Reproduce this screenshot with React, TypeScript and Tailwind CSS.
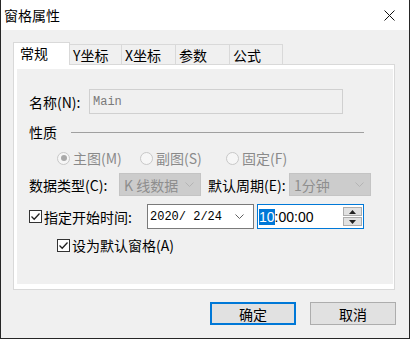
import React from 'react'

const CJK = "font-['Noto_Sans_CJK_SC',sans-serif]"

function Check() {
  return (
    <span className="w-[13px] h-[13px] border border-[#333333] bg-white flex items-center justify-center shrink-0">
      <svg width="11" height="11" viewBox="0 0 11 11">
        <path d="M1.5 5.5 L4.2 8.2 L9.5 2.5" fill="none" stroke="#222" strokeWidth="1.3" />
      </svg>
    </span>
  )
}

function Radio({ checked, label, w }: { checked?: boolean; label: string; w: string }) {
  return (
    <div className={`flex items-center ${w}`}>
      <span className="w-[13px] h-[13px] rounded-full border border-[#c8c8c8] bg-[#f6f6f6] flex items-center justify-center">
        {checked && <span className="w-[6px] h-[6px] rounded-full bg-[#a9a9a9]" />}
      </span>
      <span className="ml-[3px] text-[#8a8a8a]">{label}</span>
    </div>
  )
}

function Chevron({ color }: { color: string }) {
  return (
    <svg width="9" height="6" viewBox="0 0 9 6">
      <path d="M0.5 0.5 L4.5 4.5 L8.5 0.5" fill="none" stroke={color} strokeWidth="1" />
    </svg>
  )
}

function Combo({ text }: { text: string }) {
  return (
    <div className="w-[82px] h-[23px] border border-[#c4c4c4] bg-[#cccccc] flex items-center pl-[4px] pr-[6px]">
      <span className="flex-1 text-[#8e8e8e]">{text}</span>
      <Chevron color="#b4b4b4" />
    </div>
  )
}

const tabs = [
  { label: 'Y坐标', w: 'w-[52px]' },
  { label: 'X坐标', w: 'w-[54px]' },
  { label: '参数', w: 'w-[54px]' },
  { label: '公式', w: 'w-[53px]' },
]

export default function App() {
  return (
    <div className={`w-[410px] h-[339px] bg-[#f0f0f0] border-l border-r border-b border-[#262626] flex flex-col text-[14px] leading-[18px] text-black ${CJK}`}>
      <div className="h-[30px] bg-white flex items-center pl-[3px] pr-[14px] shrink-0">
        <span className="flex-1">窗格属性</span>
        <svg width="11" height="11" viewBox="0 0 11 11">
          <path d="M0.5 0.5 L10.5 10.5 M10.5 0.5 L0.5 10.5" stroke="#111" strokeWidth="1" />
        </svg>
      </div>

      <div className="pl-[12px] pr-[14px] pt-[12px]">
        <div className="flex items-end h-[22px]">
          <div className="w-[57px] h-[23px] -mb-px relative z-10 bg-white border-l border-t border-r border-[#d9d9d9] pl-[6px] pt-[1px]">常规</div>
          {tabs.map((t) => (
            <div key={t.label} className={`${t.w} h-[20px] border-t border-r border-[#d9d9d9] bg-[#f0f0f0] pl-[3px] pt-[1px]`}>
              {t.label}
            </div>
          ))}
        </div>

        <div className="h-[226px] border border-[#d9d9d9] bg-white pt-[4px] pl-[3px] pr-[1px] pb-[5px]">
          <div className="h-full bg-[#f0f0f0] pl-[12px] flex flex-col">
            <div className="flex items-center h-[25px] mt-[20px]">
              <span className="w-[60px]">名称(N):</span>
              <div className="w-[254px] h-[25px] border border-[#d0d0d0] bg-[#f0f0f0] flex items-center pl-[3px] font-['Liberation_Mono',monospace] text-[12px] text-[#7a7a7a]">
                Main
              </div>
            </div>

            <div className="flex items-center h-[20px] mt-[8px]">
              <span>性质</span>
              <span className="ml-[14px] w-[293px] h-px bg-[#a0a0a0]" />
            </div>

            <div className="flex items-center h-[20px] mt-[6px] pl-[28px]">
              <Radio checked label="主图(M)" w="w-[83px]" />
              <Radio label="副图(S)" w="w-[86px]" />
              <Radio label="固定(F)" w="w-[80px]" />
            </div>

            <div className="flex items-center h-[23px] mt-[5px]">
              <span className="w-[90px]">数据类型(C):</span>
              <Combo text="K 线数据" />
              <span className="w-[88px] pl-[7px]">默认周期(E):</span>
              <Combo text="1分钟" />
            </div>

            <div className="flex items-center h-[25px] mt-[8px]">
              <Check />
              <span className="ml-[2px] w-[103px]">指定开始时间:</span>
              <div className="w-[107px] h-[25px] border border-[#7a7a7a] bg-white flex items-center pl-[2px] pr-[9px]">
                <span className="flex-1 font-['Liberation_Mono',monospace] text-[12px]">2020/ 2/24</span>
                <Chevron color="#606060" />
              </div>
              <div className="ml-[3px] w-[107px] h-[25px] border border-[#0078d7] bg-white flex items-center pl-[1px] pr-[1px]">
                <span className="flex-1 font-['Liberation_Sans',sans-serif] text-[14px]">
                  <span className="bg-[#0078d7] text-white">10</span>:00:00
                </span>
                <div className="w-[19px] h-[19px] flex flex-col gap-px">
                  <div className="flex-1 border border-[#adadad] bg-[#e1e1e1] flex items-center justify-center">
                    <svg width="7" height="4" viewBox="0 0 7 4"><path d="M0 4 L3.5 0 L7 4 Z" fill="#222" /></svg>
                  </div>
                  <div className="flex-1 border border-[#adadad] bg-[#e1e1e1] flex items-center justify-center">
                    <svg width="7" height="4" viewBox="0 0 7 4"><path d="M0 0 L3.5 4 L7 0 Z" fill="#222" /></svg>
                  </div>
                </div>
              </div>
            </div>

            <div className="flex items-center h-[16px] mt-[8px] pl-[28px]">
              <Check />
              <span className="ml-[2px]">设为默认窗格(A)</span>
            </div>
          </div>
        </div>
      </div>

      <div className="flex justify-end gap-[14px] pr-[13px] mt-[12px]">
        <button className="w-[86px] h-[23px] border-2 border-[#0078d7] bg-[#e1e1e1] flex items-center justify-center">确定</button>
        <button className="w-[86px] h-[23px] border border-[#adadad] bg-[#e1e1e1] flex items-center justify-center">取消</button>
      </div>
    </div>
  )
}
